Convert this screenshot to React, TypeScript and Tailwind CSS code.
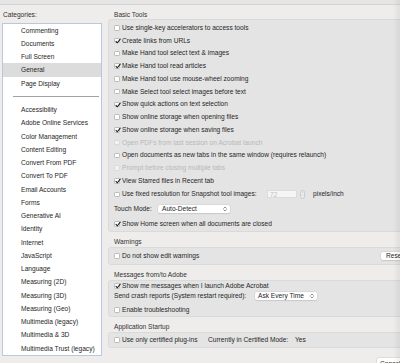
import React from "react";

const Chev = () => (
  <svg width="4" height="6" viewBox="0 0 8 12" className="shrink-0">
    <path d="M1.5 4.5 L4 2 L6.5 4.5 M1.5 7.5 L4 10 L6.5 7.5" fill="none" stroke="#555" strokeWidth="1.3" strokeLinecap="round" strokeLinejoin="round" />
  </svg>
);

const Box = ({ checked = false, disabled = false }: { checked?: boolean; disabled?: boolean }) => (
  <span
    className={`relative shrink-0 w-[5.5px] h-[5.5px] rounded-[1.2px] border-[0.5px] mr-[2.5px] ${
      disabled ? "border-[#dadada] bg-[#f2f2f2]" : "border-[#bcbcbc] bg-white"
    }`}
  >
    {checked && (
      <svg className="absolute left-[-0.5px] top-[-1px]" width="6" height="6" viewBox="0 0 12 12">
        <path d="M2 6.8 L4.8 9.6 L10.4 2.2" fill="none" stroke="#1c1c1c" strokeWidth="2.1" strokeLinecap="round" strokeLinejoin="round" />
      </svg>
    )}
  </span>
);

const Row = ({
  label,
  checked = false,
  disabled = false,
}: {
  label: string;
  checked?: boolean;
  disabled?: boolean;
}) => (
  <div className={`h-[12.75px] flex items-center whitespace-nowrap ${disabled ? "text-[#b8b8b8]" : ""}`}>
    <Box checked={checked} disabled={disabled} />
    <span className="leading-[10px]">{label}</span>
  </div>
);

const categories1 = ["Commenting", "Documents", "Full Screen", "General", "Page Display"];
const categories2 = [
  "Accessibility",
  "Adobe Online Services",
  "Color Management",
  "Content Editing",
  "Convert From PDF",
  "Convert To PDF",
  "Email Accounts",
  "Forms",
  "Generative AI",
  "Identity",
  "Internet",
  "JavaScript",
  "Language",
  "Measuring (2D)",
  "Measuring (3D)",
  "Measuring (Geo)",
  "Multimedia (legacy)",
  "Multimedia & 3D",
  "Multimedia Trust (legacy)",
];

export default function App() {
  return (
    <div className="relative w-[400px] h-[363px] overflow-hidden bg-[#eeedec] text-[#262626] text-[6.6px] [font-family:'Liberation_Sans',Arial,sans-serif]">
      <div className="h-[5px] bg-[#e5e5e5] border-b border-[#d4d4d4]" />
      <div className="flex">
        {/* Left column */}
        <div className="w-[108px] shrink-0">
          <div className="h-[17.5px] pt-[5px] pl-[3px] leading-[10px] text-[#2e2e2e]">Categories:</div>
          <div className="ml-[2px] w-[100px] h-[333.5px] bg-white border border-[#b9c8df]">
            {categories1.map((c) => (
              <div
                key={c}
                className={`h-[13.25px] leading-[13.25px] pl-[18px] whitespace-nowrap ${c === "General" ? "bg-[#dcdcdc]" : ""}`}
              >
                {c}
              </div>
            ))}
            <div className="h-[13.25px] flex items-center">
              <div className="ml-[10px] mr-[2px] flex-1 h-[1px] bg-[#a2a2a2]" />
            </div>
            {categories2.map((c) => (
              <div key={c} className="h-[13.25px] leading-[13.25px] pl-[18px] whitespace-nowrap">
                {c}
              </div>
            ))}
          </div>
        </div>

        {/* Right column */}
        <div className="w-[296px] shrink-0">
          <div className="h-[14px] pt-[5px] pl-[6px] leading-[10px] text-[#333]">Basic Tools</div>
          <div className="h-[213px] bg-[#e4e4e4] border border-[#dadada] rounded-[3px] pt-[1.6px] pl-[5px]">
            <Row label="Use single-key accelerators to access tools" />
            <Row label="Create links from URLs" checked />
            <Row label="Make Hand tool select text & images" />
            <Row label="Make Hand tool read articles" checked />
            <Row label="Make Hand tool use mouse-wheel zooming" />
            <Row label="Make Select tool select images before text" />
            <Row label="Show quick actions on text selection" checked />
            <Row label="Show online storage when opening files" />
            <Row label="Show online storage when saving files" checked />
            <Row label="Open PDFs from last session on Acrobat launch" disabled />
            <Row label="Open documents as new tabs in the same window (requires relaunch)" />
            <Row label="Prompt before closing multiple tabs" disabled />
            <Row label="View Starred files in Recent tab" checked />
            <div className="h-[14px] flex items-center whitespace-nowrap">
              <Box />
              <span className="w-[145px] shrink-0 leading-[10px]">Use fixed resolution for Snapshot tool images:</span>
              <span className="w-[30px] h-[8px] shrink-0 bg-[#f5f5f5] border-[0.5px] border-[#dcdcdc] pl-[2px] leading-[7px] text-[#c2c2c2]">
                72
              </span>
              <span className="ml-[3px] w-[5px] h-[9px] shrink-0 rounded-full border-[0.5px] border-[#c9c9c9] bg-[#efefef] flex items-center justify-center">
                <svg width="3" height="6" viewBox="0 0 6 12">
                  <path d="M1 4.5 L3 2.5 L5 4.5 M1 7.5 L3 9.5 L5 7.5" fill="none" stroke="#b5b5b5" strokeWidth="1" />
                </svg>
              </span>
              <span className="ml-[8px] leading-[10px]">pixels/inch</span>
            </div>
            <div className="h-[15px] flex items-center whitespace-nowrap">
              <span className="w-[44px] shrink-0 leading-[10px]">Touch Mode:</span>
              <span className="w-[72px] h-[8px] shrink-0 bg-white rounded-[2px] shadow-[0_0_0_0.5px_#d2d2d2,0_0.5px_1px_rgba(0,0,0,0.15)] pl-[4px] pr-[3px] flex items-center justify-between">
                <span className="leading-[8px]">Auto-Detect</span>
                <Chev />
              </span>
            </div>
            <div className="h-[15px] flex items-center whitespace-nowrap">
              <Box checked />
              <span className="leading-[10px]">Show Home screen when all documents are closed</span>
            </div>
          </div>

          <div className="h-[15px] pt-[5px] pl-[6px] leading-[10px] text-[#333]">Warnings</div>
          <div className="h-[18px] bg-[#e4e4e4] border border-[#dadada] rounded-[3px] pl-[5px]">
            <div className="h-[16px] flex items-center whitespace-nowrap">
              <Box />
              <span className="w-[259px] shrink-0 leading-[10px]">Do not show edit warnings</span>
              <span className="w-[30px] h-[8px] shrink-0 bg-white rounded-[2px] shadow-[0_0_0_0.5px_#d0d0d0,0_0.5px_1px_rgba(0,0,0,0.15)] pl-[5px] leading-[8px]">
                Reset
              </span>
            </div>
          </div>

          <div className="h-[14.5px] pt-[5px] pl-[6px] leading-[10px] text-[#333]">Messages from/to Adobe</div>
          <div className="h-[37.5px] bg-[#e4e4e4] border border-[#dadada] rounded-[3px] pl-[5px]">
            <div className="h-[10.5px] flex items-center whitespace-nowrap">
              <Box checked />
              <span className="leading-[10px]">Show me messages when I launch Adobe Acrobat</span>
            </div>
            <div className="h-[10px] flex items-center whitespace-nowrap">
              <span className="w-[141px] shrink-0 leading-[10px]">Send crash reports (System restart required):</span>
              <span className="w-[62px] h-[7.5px] shrink-0 bg-white rounded-[2px] shadow-[0_0_0_0.5px_#d2d2d2,0_0.5px_1px_rgba(0,0,0,0.15)] pl-[3px] pr-[3px] flex items-center justify-between">
                <span className="leading-[7.5px]">Ask Every Time</span>
                <Chev />
              </span>
            </div>
            <div className="h-[15px] pt-[3px] flex items-center whitespace-nowrap">
              <Box />
              <span className="leading-[10px]">Enable troubleshooting</span>
            </div>
          </div>

          <div className="h-[15px] pt-[5px] pl-[6px] leading-[10px] text-[#333]">Application Startup</div>
          <div className="h-[15.5px] bg-[#e4e4e4] border border-[#dadada] rounded-[3px] pl-[5px]">
            <div className="h-[13.5px] flex items-center whitespace-nowrap">
              <Box />
              <span className="w-[86px] shrink-0 leading-[10px]">Use only certified plug-ins</span>
              <span className="w-[87px] shrink-0 leading-[10px]">Currently in Certified Mode:</span>
              <span className="leading-[10px]">Yes</span>
            </div>
          </div>

          <div className="pt-[10.5px] pl-[269px]">
            <div className="w-[32px] h-[10px] bg-white rounded-[2px] shadow-[0_0_0_0.5px_#d0d0d0,0_0.5px_1px_rgba(0,0,0,0.15)] pl-[3px] pt-[1px] leading-[9px] whitespace-nowrap">
              Cancel
            </div>
          </div>
        </div>
      </div>
      <div className="absolute right-0 top-0 w-[7px] h-full bg-linear-to-r from-transparent to-[rgba(0,0,0,0.06)]" />
    </div>
  );
}
